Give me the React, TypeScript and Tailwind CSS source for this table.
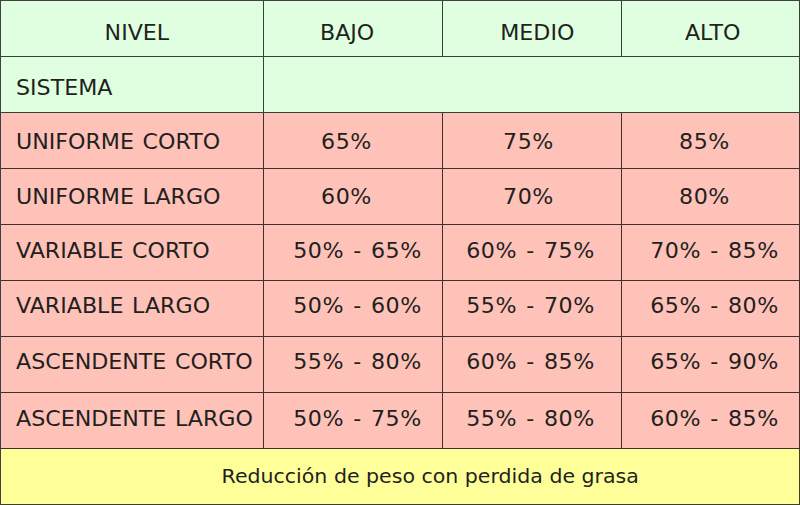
import React from "react";

const rows: { cells: [string, string, string, string]; pad: string; long: boolean }[] = [
  { cells: ["UNIFORME CORTO", "65%", "75%", "85%"], pad: "pt-[4px]", long: false },
  { cells: ["UNIFORME LARGO", "60%", "70%", "80%"], pad: "pt-[2px]", long: false },
  { cells: ["VARIABLE CORTO", "50% - 65%", "60% - 75%", "70% - 85%"], pad: "pb-[2px]", long: true },
  { cells: ["VARIABLE LARGO", "50% - 60%", "55% - 70%", "65% - 80%"], pad: "pb-[4px]", long: true },
  { cells: ["ASCENDENTE CORTO", "55% - 80%", "60% - 85%", "65% - 90%"], pad: "pb-[4px]", long: true },
  { cells: ["ASCENDENTE LARGO", "50% - 75%", "55% - 80%", "60% - 85%"], pad: "pb-[3px]", long: true },
];

const shortShift = ["pr-[12px]", "pr-[6px]", "pr-[11px]"];
const longShift = ["pl-[9px]", "pr-[3px]", "pl-[9px]"];

function T({ children, left, num }: { children: React.ReactNode; left?: boolean; num?: boolean }) {
  return (
    <span
      className={`inline-block whitespace-nowrap scale-x-[1.08] [word-spacing:1.5px] ${
        num ? "tracking-[0.5px]" : ""
      } ${left ? "origin-left" : "origin-center"}`}
    >
      {children}
    </span>
  );
}

export default function App() {
  const cell = "h-[56px] border-r border-b border-black/75 flex items-center text-[20.5px]";
  return (
    <div
      className="w-[800px] h-[505px] bg-white text-[#221f1e]"
      style={{ fontFamily: '"DejaVu Sans", Verdana, sans-serif' }}
    >
      <div className="grid grid-cols-[263px_179px_179px_178px] border-t border-l border-black/75">
        <div className={`${cell} pt-[9px] pl-[10px] bg-[#e0ffe0] justify-center`}><T>NIVEL</T></div>
        <div className={`${cell} pt-[9px] pr-[12px] bg-[#e0ffe0] justify-center`}><T>BAJO</T></div>
        <div className={`${cell} pt-[9px] pl-[10px] bg-[#e0ffe0] justify-center`}><T>MEDIO</T></div>
        <div className={`${cell} pt-[9px] pl-[5px] bg-[#e0ffe0] justify-center`}><T>ALTO</T></div>
        <div className={`${cell} pt-[8px] bg-[#e0ffe0] pl-[15px]`}><T left>SISTEMA</T></div>
        <div className={`${cell} bg-[#e0ffe0] col-span-3`}></div>
        {rows.map((r) => {
          const sh = r.long ? longShift : shortShift;
          return (
            <React.Fragment key={r.cells[0]}>
              <div className={`${cell} ${r.pad} bg-[#ffc2b9] pl-[15px]`}><T left>{r.cells[0]}</T></div>
              <div className={`${cell} ${r.pad} ${sh[0]} bg-[#ffc2b9] justify-center`}><T num>{r.cells[1]}</T></div>
              <div className={`${cell} ${r.pad} ${sh[1]} bg-[#ffc2b9] justify-center`}><T num>{r.cells[2]}</T></div>
              <div className={`${cell} ${r.pad} ${sh[2]} bg-[#ffc2b9] justify-center`}><T num>{r.cells[3]}</T></div>
            </React.Fragment>
          );
        })}
        <div className="h-[56px] border-r border-b border-black/75 flex items-center justify-center col-span-4 pl-[60px] bg-[#ffff99] text-[19px]">
          <span className="inline-block whitespace-nowrap scale-x-[1.08] origin-center">
            Reducción de peso con perdida de grasa
          </span>
        </div>
      </div>
    </div>
  );
}
